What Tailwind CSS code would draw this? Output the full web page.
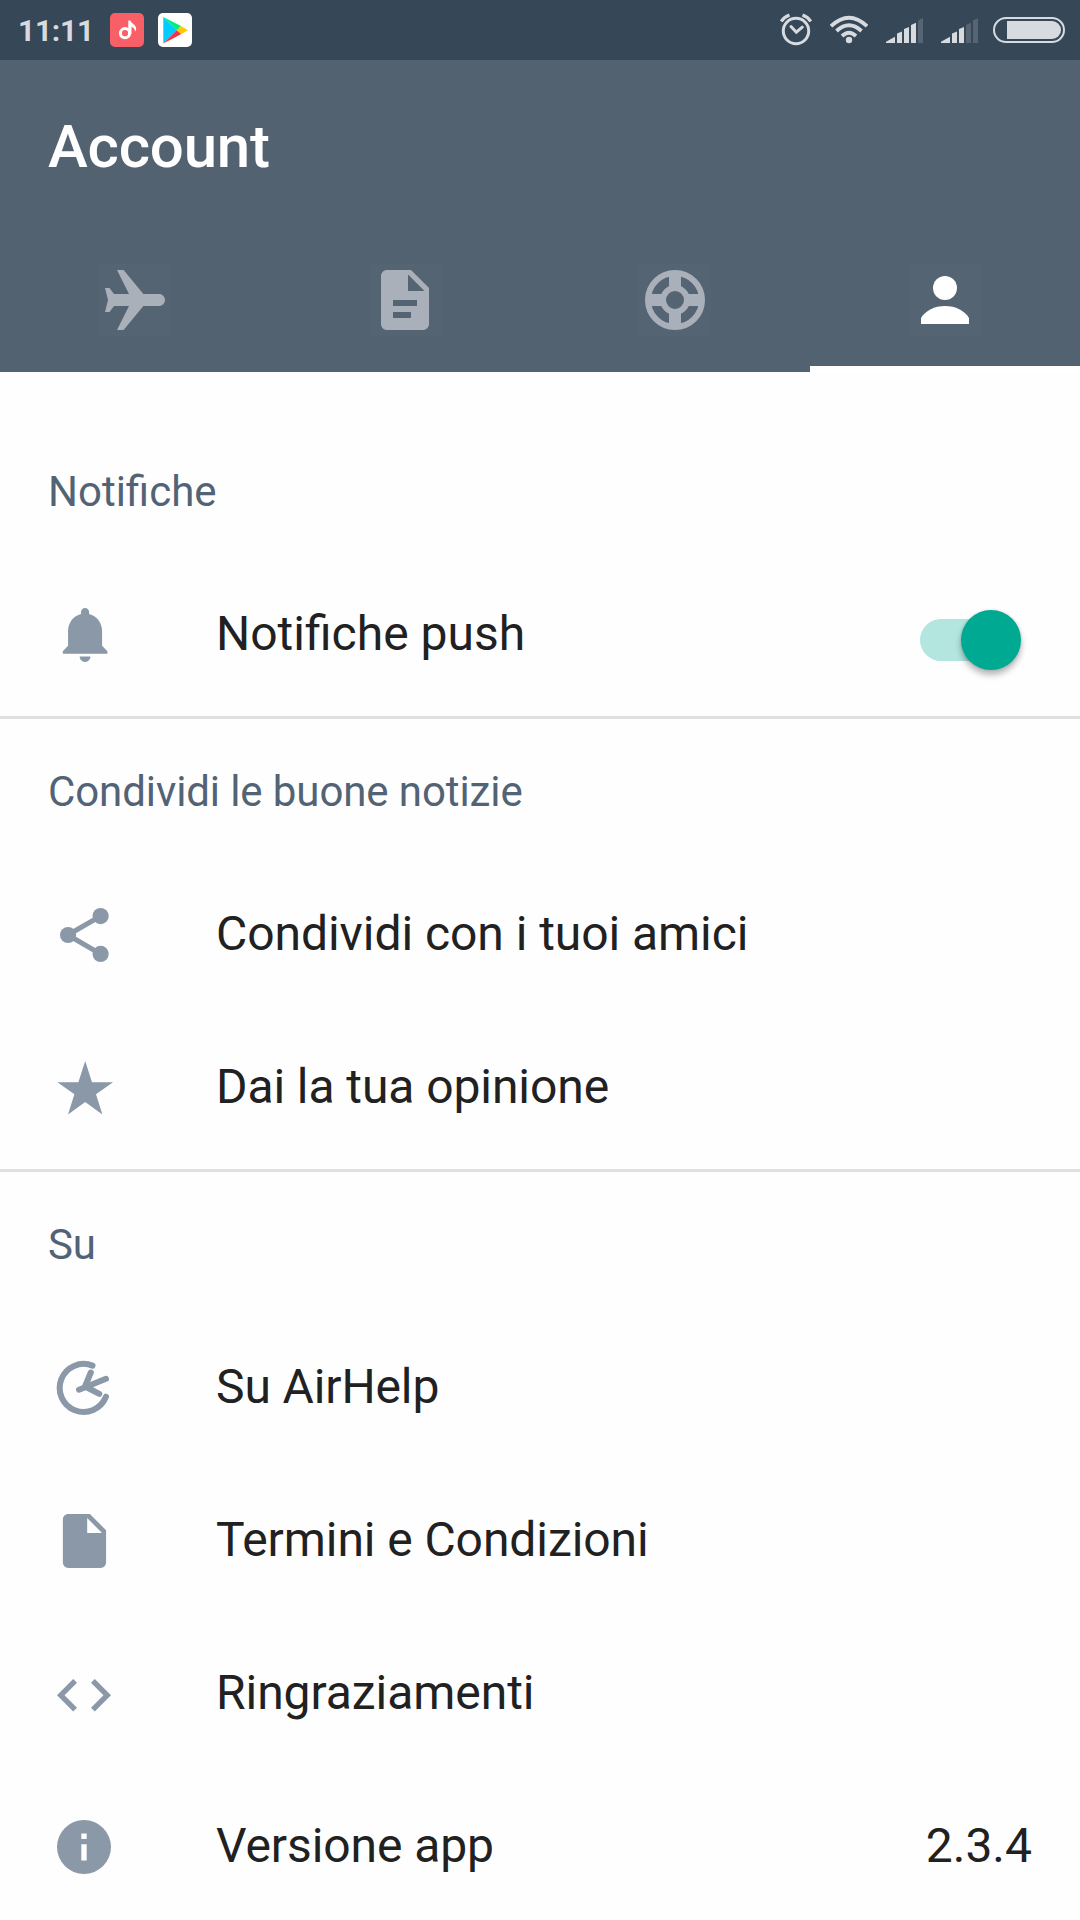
<!DOCTYPE html>
<html lang="it">
<head>
<meta charset="utf-8">
<title>Account</title>
<script src="https://cdn.jsdelivr.net/npm/@tailwindcss/browser@4"></script>
</head>
<body class="w-[1080px] h-[1920px] overflow-hidden bg-[#fefefe] font-['Roboto',sans-serif] text-[#212121]">
<div class="flex h-[60px] items-center bg-[#364758] pl-[18px] pr-[15px] text-[#d7dadf]">
  <span class="w-[92px] whitespace-nowrap pt-0.5 text-[30px] leading-none font-bold tracking-[-0.3px]">11:11</span>
  <svg class="size-[34px]" viewBox="0 0 34 34"><rect width="34" height="34" rx="5" fill="#f95f67"/><circle cx="15" cy="20.2" r="4.6" fill="none" stroke="#fff" stroke-width="3"/><path d="M18.3 7.5h2.2c.4 3 5.8 4 5.700 8.500-.1 1.200-.6 2-1.300 2.500.4-2.500-1.400-4.200-3.400-4.500v7h-3.200z" fill="#fff"/></svg>
  <svg class="ml-[14px] size-[34px]" viewBox="0 0 34 34"><rect width="34" height="34" rx="5" fill="#fff"/><path d="M5.300 4L19 17.200 5.300 30.500z" fill="#0cf"/><path d="M5.300 4L23 13l-4 4.300z" fill="#00f076"/><path d="M23 13l7 4.200-7 4-4.200-4z" fill="#ffc900"/><path d="M18.800 17.200l4.200 4L5.300 30.500z" fill="#f6324a"/></svg>
  <svg class="ml-auto h-[60px] w-[32px]" viewBox="780 0 32 60" fill="none" stroke="currentColor"><circle cx="796" cy="31" r="12.700" stroke-width="3"/><path d="M791 26.500l5.300 5.700 6-5" stroke-width="3" stroke-linecap="round"/><path d="M781.300 21.500q2.700-4.500 8.200-6.500M802.500 15q5.500 2 8.200 6.500" stroke-width="3.300"/></svg>
  <svg class="ml-[18px] h-[60px] w-[38px]" viewBox="830 0 38 60" fill="none" stroke="currentColor" stroke-width="3.800"><path d="M831 26.200q18-17 36 0M836.500 31q12.500-11.500 25 0M842 36q7-6.500 14 0"/><circle cx="849" cy="40" r="3.200" fill="currentColor" stroke="none"/></svg>
  <svg class="ml-[18px] h-[60px] w-[37px]" viewBox="0 0 37 60" fill="currentColor"><path d="M0 43v-1.300l9-5V43zM11 43v-9.500l5-2V43zM18 43V29l5-2v16zM25 43V25l5-2.300V43z"/><path d="M32 43V20.500l5-2.500v25z" fill="#566474"/></svg>
  <svg class="ml-[18px] h-[60px] w-[37px]" viewBox="0 0 37 60" fill="currentColor"><path d="M0 43v-1.300l9-5V43zM11 43v-9.500l5-2V43zM18 43V29l5-2v16z"/><path d="M25 43V25l5-2.300V43zM32 43V20.500l5-2.500v25z" fill="#566474"/></svg>
  <svg class="ml-[15px] h-[60px] w-[72px]" viewBox="993 0 72 60"><rect x="994" y="18" width="70" height="24" rx="12" fill="none" stroke="currentColor" stroke-width="2"/><path d="M1007 21h45a9 9 0 0 1 0 18h-45z" fill="currentColor"/></svg>
</div>
<header class="bg-[#536271] text-white">
  <h1 class="flex h-[168px] items-center px-12 pt-1.5 text-[60px] font-medium tracking-[-0.2px]">Account</h1>
  <nav class="grid h-[144px] grid-cols-4 text-[#a9b0ba]">
    <div class="flex items-center justify-center"><svg class="size-[72px] bg-[#546473]" viewBox="0 0 24 24" fill="currentColor"><path d="M22 12c0-1.100-.9-2-2-2h-5.200L8.200 2H6l4 8H5L3.500 8H2l1 4-1 4h1.500L5 14h5l-4 8h2.200l6.600-8H20c1.100 0 2-.9 2-2z"/></svg></div>
    <div class="flex items-center justify-center"><svg class="size-[72px] bg-[#546473]" viewBox="0 0 24 24" fill="currentColor"><path fill-rule="evenodd" d="M6 2c-1.100 0-2 .9-2 2v16c0 1.100.9 2 2 2h12c1.100 0 2-.9 2-2V8l-6-6zM8 12h8v2H8zM8 16h6v2H8zM13 9V3.500L18.500 9z"/></svg></div>
    <div class="flex items-center justify-center"><svg class="size-[72px] bg-[#546473]" viewBox="0 0 24 24" fill="none" stroke="currentColor" stroke-width="2"><circle cx="12" cy="12" r="9"/><circle cx="12" cy="12" r="4" /><path stroke-width="4" d="M12 3v6M12 15v6M3 12h6M15 12h6"/></svg></div>
    <div class="flex items-center justify-center border-b-[6px] border-white pt-[6px] text-white"><svg class="size-[72px] bg-[#546473]" viewBox="0 0 24 24" fill="currentColor"><circle cx="12" cy="8" r="4"/><path d="M4 20v-2c1.500-2.500 4.500-4 8-4s6.500 1.500 8 4v2z"/></svg></div>
  </nav>
</header>
<main class="pt-[47px]">
  <section class="border-b-[3px] border-[#e0e0e0] pb-1">
    <h2 class="flex h-[140px] items-center px-12 pt-1 text-[42px] text-[#526375]">Notifiche</h2>
    <div class="flex h-[153px] items-center pl-[51px] pr-12 text-5xl">
      <svg class="mb-[2px] size-[66px] text-[#8a98a8]" viewBox="-.222 -.222 24.444 24.444" fill="currentColor"><path d="M12.400 22c1.100 0 2-.9 2-2h-4c0 1.100.9 2 2 2zM18.700 16v-5.500c0-3.070-2-5.640-4.800-6.320V3.500c0-.83-.67-1.500-1.500-1.500s-1.500.67-1.500 1.500v.68c-2.800.68-4.800 3.250-4.800 6.320V16l-1.950 2v.9h16.500V18z"/></svg>
      <span class="ml-[99px] pb-1">Notifiche push</span>
      <div class="relative ml-auto mr-[10.500px] mt-2 flex h-[60px] w-[101.500px] items-center"><div class="h-[42px] w-[96px] rounded-full bg-[#b2e6df]"></div><div class="absolute right-[0.5px] top-0 size-[60px] rounded-full bg-[#00a991] shadow-[0_5px_6px_rgba(0,0,0,0.28),0_0_3px_rgba(0,0,0,0.15)]"></div></div>
    </div>
  </section>
  <section class="border-b-[3px] border-[#e0e0e0] pb-1">
    <h2 class="flex h-[140px] items-center px-12 pt-1 text-[42px] tracking-[-0.1px] text-[#526375]">Condividi le buone notizie</h2>
    <div class="flex h-[153px] items-center pl-[51px] pr-12 text-5xl tracking-[-0.05px]">
      <svg class="mb-[2px] size-[66px] text-[#8a98a8]" viewBox="-.222 -.222 24.444 24.444" fill="currentColor"><circle cx="18.150" cy="5" r="3"/><circle cx="6.100" cy="12" r="3"/><circle cx="18.150" cy="19" r="3"/><path d="M18.100 5L6 12l12.100 7" fill="none" stroke="currentColor" stroke-width="1.900"/></svg>
      <span class="ml-[99px] pb-1">Condividi con i tuoi amici</span>
    </div>
    <div class="flex h-[153px] items-center pl-[51px] pr-12 text-5xl tracking-[-0.08px]">
      <svg class="mb-[2px] size-[66px] text-[#8a98a8]" viewBox="0 0 66 66" fill="currentColor"><path d="M34.200 6l6.800 21.200h21L45 39.300l6.400 20.200-17.200-12.500-17.200 12.500 6.400-20.200-17-12.100h21z"/></svg>
      <span class="ml-[99px] pb-1">Dai la tua opinione</span>
    </div>
  </section>
  <section>
    <h2 class="flex h-[140px] items-center px-12 pt-1 text-[42px] tracking-[-0.1px] text-[#526375]">Su</h2>
    <div class="flex h-[153px] items-center pl-[51px] pr-12 text-5xl tracking-[-0.12px]">
      <svg class="mb-[2px] size-[66px] text-[#8a98a8]" viewBox="0 0 66 66" fill="none" stroke="currentColor" stroke-width="6" stroke-linecap="round" stroke-linejoin="round"><path d="M41.500 10.600A24 24 0 1 0 55 41.700M55 23.800L28 34.700M39.800 17.500L34 31.500 48.300 38.800"/></svg>
      <span class="ml-[99px] pb-1">Su AirHelp</span>
    </div>
    <div class="flex h-[153px] items-center pl-[51px] pr-12 text-5xl tracking-[-0.08px]">
      <svg class="mb-[2px] size-[66px] text-[#8a98a8]" viewBox="-.400 -.222 24.444 24.444" fill="currentColor"><path fill-rule="evenodd" d="M6 2c-1.100 0-2 .9-2 2v16c0 1.100.9 2 2 2h12c1.100 0 2-.9 2-2V8l-6-6zM13 9V3.500L18.500 9z"/></svg>
      <span class="ml-[99px] pb-1">Termini e Condizioni</span>
    </div>
    <div class="flex h-[153px] items-center pl-[51px] pr-12 text-5xl tracking-[-0.05px]">
      <svg class="mb-[2px] size-[66px] text-[#8a98a8]" viewBox="-.222 -.700 24.444 24.444" fill="currentColor"><path d="M9.400 16.600L4.800 12l4.600-4.600L8 6l-6 6 6 6zM14.600 16.600l4.600-4.600-4.600-4.600L16 6l6 6-6 6z"/></svg>
      <span class="ml-[99px] pb-1">Ringraziamenti</span>
    </div>
    <div class="flex h-[153px] items-center pl-[51px] pr-12 text-5xl tracking-[-0.08px]">
      <svg class="mb-[2px] size-[66px] text-[#8a98a8]" viewBox="-.222 -.222 24.444 24.444" fill="currentColor"><path fill-rule="evenodd" d="M12 2a10 10 0 1 0 0 20 10 10 0 0 0 0-20zM11 7h2v2h-2zM11 11h2v6h-2z"/></svg>
      <span class="ml-[99px] pb-1">Versione app</span>
      <span class="ml-auto pb-1 tracking-normal">2.3.4</span>
    </div>
  </section>
</main>
</body>
</html>
